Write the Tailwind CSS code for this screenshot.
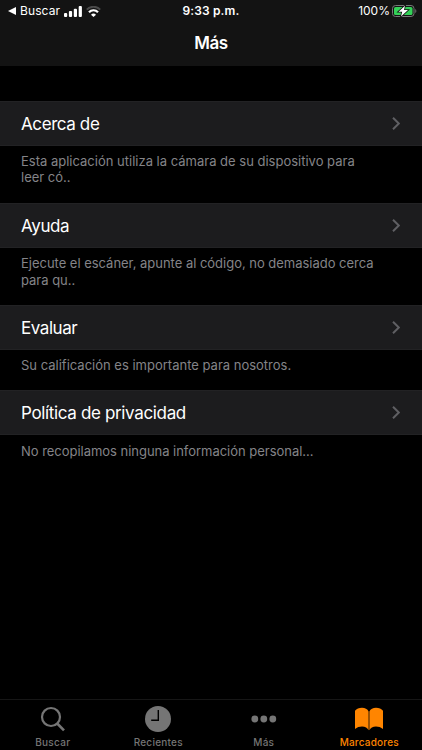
<!DOCTYPE html>
<html lang="es">
<head>
  <meta charset="UTF-8">
  <meta name="viewport" content="width=device-width, initial-scale=1.0">
  <title>Más</title>
  <script src="https://cdn.jsdelivr.net/npm/@tailwindcss/browser@4"></script>
</head>
<body class="bg-black text-white font-['Inter',sans-serif]">
  <div class="flex flex-col w-[422px] h-[750px] overflow-hidden">

    <header class="h-[66px] shrink-0 bg-[#131313]">
      <!-- Status bar -->
      <div class="grid grid-cols-3 items-center h-[22px] pl-[8px] pr-[5px] text-[12px] leading-[22px]">
        <div class="flex items-center">
          <svg class="w-[8px] h-[8px]" viewBox="0 0 8 8" fill="#fff"><path d="M8 0v8L0 4z"/></svg>
          <span class="ml-[4px] tracking-[0.1px]">Buscar</span>
          <svg class="ml-[4px] w-[18px] h-[11px]" viewBox="0 0 18 11" fill="#fff">
            <rect x="0" y="7" width="3.2" height="4" rx="1"/>
            <rect x="4.9" y="5" width="3.2" height="6" rx="1"/>
            <rect x="9.8" y="2.7" width="3.2" height="8.3" rx="1"/>
            <rect x="14.7" y="0" width="3.2" height="11" rx="1"/>
          </svg>
          <svg class="ml-[4px] w-[15px] h-[11px]" viewBox="0 0 15 11" fill="none" stroke-width="2">
            <path d="M.8 3.6a9.4 9.4 0 0 1 13.4 0" stroke="#4a4a4a"/>
            <path d="M3 6.2a6.2 6.2 0 0 1 9 0" stroke="#fff" stroke-width="2.2"/>
            <path d="M7.5 11L5 8.7a3.8 3.8 0 0 1 5 0z" fill="#fff"/>
          </svg>
        </div>
        <div class="text-center font-semibold tracking-[0.15px] -ml-[3px]">9:33 p.m.</div>
        <div class="flex items-center justify-end">
          <span>100%</span>
          <svg class="ml-[2px] w-[25px] h-[12px]" viewBox="0 0 25 12">
            <rect x=".5" y=".5" width="21.5" height="11" rx="3" fill="none" stroke="#777"/>
            <rect x="2" y="2" width="18.5" height="8" rx="1.6" fill="#34d158"/>
            <path d="M23.3 4v4c1.4-.6 1.4-3.400 0-4z" fill="#777"/>
            <path d="M13 .8L6.500 6.800h3.700L9 11.500l7-6.500h-4z" fill="#fff" stroke="#131313" stroke-width="1.6" paint-order="stroke"/>
          </svg>
        </div>
      </div>
      <h1 class="text-center text-[17px] leading-[43px] font-semibold tracking-[-0.4px]">Más</h1>
    </header>

    <main class="flex-1 pt-[35px]">
      <section>
        <a class="flex items-center justify-between h-[45px] pl-[21px] pr-[22px] bg-[#1c1c1e] border-y border-[#222224]">
          <span class="pt-[2px] text-[17px] tracking-[-0.4px]">Acerca de</span>
          <svg class="w-[8px] h-[13px]" viewBox="0 0 8 13" fill="none" stroke="#5f5f63" stroke-width="2"><path d="M1 .8l5.8 5.7L1 12.2"/></svg>
        </a>
        <p class="h-[57px] pt-[7px] pl-[21px] pr-[40px] text-[13px] leading-[16px] text-[#848488]">Esta aplicación utiliza la cámara de su dispositivo para<br>leer có..</p>
      </section>

      <section>
        <a class="flex items-center justify-between h-[45px] pl-[21px] pr-[22px] bg-[#1c1c1e] border-y border-[#222224]">
          <span class="pt-[2px] text-[17px] tracking-[-0.37px]">Ayuda</span>
          <svg class="w-[8px] h-[13px]" viewBox="0 0 8 13" fill="none" stroke="#5f5f63" stroke-width="2"><path d="M1 .8l5.8 5.7L1 12.2"/></svg>
        </a>
        <p class="h-[57px] pt-[7px] pl-[21px] pr-[40px] text-[13px] leading-[16.5px] tracking-[-0.02px] text-[#848488]">Ejecute el escáner, apunte al código, no demasiado cerca<br>para qu..</p>
      </section>

      <section>
        <a class="flex items-center justify-between h-[45px] pl-[21px] pr-[22px] bg-[#1c1c1e] border-y border-[#222224]">
          <span class="pt-[2px] text-[17px] tracking-[-0.45px]">Evaluar</span>
          <svg class="w-[8px] h-[13px]" viewBox="0 0 8 13" fill="none" stroke="#5f5f63" stroke-width="2"><path d="M1 .8l5.8 5.7L1 12.2"/></svg>
        </a>
        <p class="h-[40px] pt-[7px] pl-[21px] pr-[40px] text-[13px] leading-[16.5px] text-[#848488]">Su calificación es importante para nosotros.</p>
      </section>

      <section>
        <a class="flex items-center justify-between h-[45px] pl-[21px] pr-[22px] bg-[#1c1c1e] border-y border-[#222224]">
          <span class="pt-[2px] text-[17px] tracking-[-0.35px]">Política de privacidad</span>
          <svg class="w-[8px] h-[13px]" viewBox="0 0 8 13" fill="none" stroke="#5f5f63" stroke-width="2"><path d="M1 .8l5.8 5.7L1 12.2"/></svg>
        </a>
        <p class="h-[40px] pt-[7.5px] pl-[21px] pr-[40px] text-[13px] leading-[16.5px] tracking-[-0.03px] text-[#848488]">No recopilamos ninguna información personal...</p>
      </section>
    </main>

    <!-- Tab bar -->
    <nav class="grid grid-cols-4 h-[51px] shrink-0 border-t border-[#161616] text-[10px] leading-[12px] font-medium text-[#757575]">
      <a class="flex flex-col items-center pt-[6px]">
        <svg class="w-[26px] h-[26px]" viewBox="0 0 26 26" fill="none" stroke="currentColor">
          <circle cx="11" cy="11" r="9" stroke-width="2.2"/>
          <path d="M17.2 17.5l6.8 6.9" stroke-width="2.6"/>
        </svg>
        <span class="mt-[4px] tracking-[0.3px]">Buscar</span>
      </a>
      <a class="flex flex-col items-center pt-[6px]">
        <svg class="w-[26px] h-[26px]" viewBox="0 0 26 26">
          <circle cx="13" cy="13" r="13" fill="currentColor"/>
          <path d="M13.3 4v10.3H6.2" fill="none" stroke="#000" stroke-width="1.4"/>
        </svg>
        <span class="mt-[4px] tracking-[0.25px]">Recientes</span>
      </a>
      <a class="flex flex-col items-center pt-[6px]">
        <svg class="w-[26px] h-[26px]" viewBox="0 0 26 26" fill="currentColor">
          <circle cx="3.8" cy="13" r="3.4"/>
          <circle cx="12.8" cy="13" r="3.4"/>
          <circle cx="21.8" cy="13" r="3.4"/>
        </svg>
        <span class="mt-[4px] tracking-[0.3px]">Más</span>
      </a>
      <a class="flex flex-col items-center pt-[6px] text-[#ff8500]">
        <svg class="w-[28px] h-[26px]" viewBox="0 0 28 26" fill="currentColor">
          <path d="M13.6 24.3V5.500C12.500 3 10 1.800 7 1.800S1.500 2.800 0 4.800V23C2 21.300 4.500 20.500 7 20.500c3.200 0 5.600 1.400 6.600 3.800z"/>
          <path d="M14.4 24.3V5.500C15.500 3 18 1.800 21 1.800s5.500 1 7 3V23c-2-1.700-4.500-2.500-7-2.500-3.200 0-5.600 1.400-6.600 3.800z"/>
        </svg>
        <span class="mt-[4px] tracking-[0.2px]">Marcadores</span>
      </a>
    </nav>
  </div>
</body>
</html>
